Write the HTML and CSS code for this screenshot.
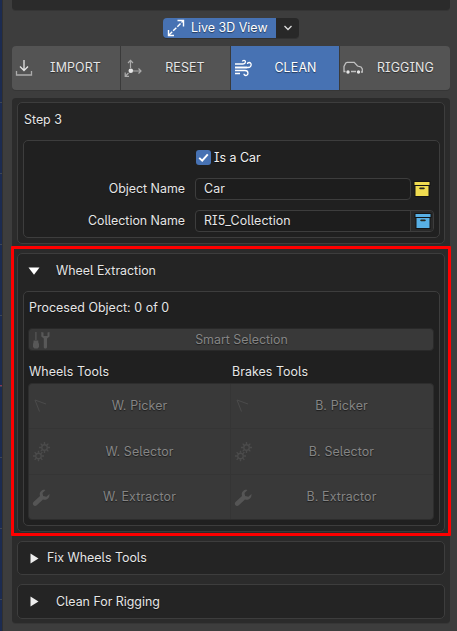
FILE: index.html
```
<!DOCTYPE html>
<html lang="en">
<head>
<meta charset="utf-8">
<title>Clean tools</title>
<link rel="stylesheet" href="styles.css">
</head>
<body>
<svg class="defs" width="0" height="0">
  <defs>
    <symbol id="pick" viewBox="0 0 18 18"><path d="M7.5 14.5 3 3l11 4" fill="none" stroke="currentColor" stroke-width="1"/></symbol>
    <symbol id="gear" viewBox="-5 -5 10 10"><circle r="2.5" fill="none" stroke="currentColor" stroke-width="1.3"/><path d="M0-3V-5M0 3V5M-3 0H-5M3 0H5M2.1-2.1 3.5-3.5M-2.1-2.1-3.5-3.5M2.1 2.1 3.5 3.5M-2.1 2.1-3.5 3.5" stroke="currentColor" stroke-width="1.2"/></symbol>
    <symbol id="gears" viewBox="0 0 18 20"><use href="#gear" x="7" y="0" width="11" height="11"/><use href="#gear" x="1" y="8.5" width="11" height="11"/></symbol>
    <symbol id="wrench" viewBox="0 0 18 18"><path d="M13.5 1C10 0 6.8 3.5 8 7L1.5 13c-2 2.400.8 5.200 3.300 3.300L11 10.500c3.500 1 7-1.500 6.400-5.500l-3 2.800-3.300-.8-.6-3z" fill="currentColor"/></symbol>
    <symbol id="box" viewBox="0 0 18 18"><path d="M.5 1h17v5h-1v11H1.500V6h-1z" fill="#151515"/><path class="fill" d="M1.500 2h15v3h-15zM2.500 6h13v10h-13z"/><path d="M7 7.500h4l1 .8-1 1H7l-1-1z" fill="#29291f"/></symbol>
  </defs>
</svg>
<div class="viewport"></div>
<main class="sidebar">
  <div class="top-panel"></div>
  <div class="view-bar">
    <div class="view-button">
      <svg width="18" height="18" viewBox="0 0 18 18" fill="none" stroke="currentColor" stroke-width="1.400"><path d="M10.500 1.500h6v6M7 16.500H1.500V11"/><path d="M2 16 16 2" stroke-dasharray="4.500 1.400"/></svg>
      <span>Live 3D View</span>
    </div>
    <div class="view-menu"><svg width="10" height="6" viewBox="0 0 10 6"><path d="M1.500 1 5 4.500 8.500 1" fill="none" stroke="#ddd" stroke-width="1.300"/></svg></div>
  </div>
  <nav class="tabs">
    <div class="tab"><svg width="18" height="18" viewBox="0 0 18 18" fill="none" stroke="currentColor" stroke-width="1.300"><path d="M9 1v10M5 7.500l4 4 4-4"/><path d="M1.500 12v4h15v-4" opacity=".6"/></svg><span>IMPORT</span></div>
    <div class="tab"><svg width="18" height="18" viewBox="0 0 18 18" fill="none" stroke="currentColor" stroke-width="1.200"><g opacity=".6"><path d="M6.500 9V1.500M4 4l2.500-2.700L9 4M9 12h8M14.500 9.500 17 12l-2.500 2.500M4.500 14l-3 3M1.200 13.500v3.800H5"/></g><circle cx="6.800" cy="11.700" r="2.300" fill="currentColor" stroke="none"/></svg><span>RESET</span></div>
    <div class="tab active"><svg width="18" height="18" viewBox="0 0 18 18" fill="none" stroke="currentColor" stroke-width="1.300"><path d="M1 5h8c3 0 3-3.700 1-3.700-1 0-1.500.6-1.500 1.200M1 8.500h13c4 0 4-5 1.200-5-1.200 0-1.800.8-1.800 1.600M1 11.500h10c4 0 3.500 5 1 5-1.200 0-2-.8-2-1.700M1 14.500h5"/><path d="M1 8.500h12" stroke-width="1.800" opacity=".6"/></svg><span>CLEAN</span></div>
    <div class="tab"><svg width="20" height="18" viewBox="0 0 20 18" fill="none" stroke="currentColor" stroke-width="1.300"><path d="M2.500 12.500H1V7.500L2.800 4l1.400-.7h7L14.500 7l3.500 1 1.300 2v3H18" opacity=".75"/><path d="M8 12.500h5" opacity=".75"/><circle cx="5" cy="13" r="1.700" fill="currentColor" stroke="none"/><circle cx="15.500" cy="13" r="1.700" fill="currentColor" stroke="none"/></svg><span>RIGGING</span></div>
  </nav>
  <section class="panel">
    <div class="card step">
      <div class="step-title">Step 3</div>
      <div class="inner fields">
        <div class="check-row"><i class="check"><svg width="15" height="15" viewBox="0 0 14 14"><path d="M3 7.300 5.800 10 11 4" fill="none" stroke="#fff" stroke-width="1.800"/></svg></i><span>Is a Car</span></div>
        <div class="field-row"><label>Object Name</label><div class="field short">Car</div><svg class="yellow" width="18" height="18"><use href="#box"/></svg></div>
        <div class="field-row"><label>Collection Name</label><div class="field long"><span>RI5_Collection</span><div class="end"><svg class="blue" width="18" height="18"><use href="#box"/></svg></div></div></div>
      </div>
    </div>
    <div class="card wheel">
      <div class="head"><svg width="12" height="8"><path d="M.5.500h11L6 7.800z" fill="#fff"/></svg><span>Wheel Extraction</span></div>
      <div class="inner tools">
        <div class="processed">Procesed Object: 0 of 0</div>
        <div class="smart"><svg width="18" height="18" viewBox="0 0 18 18" fill="currentColor"><path d="M3.300 1h1.200v8H3.300zM1.500 9.500h4.800v1.800L7 13v3l-1.500 1.500h-3L1 16v-3l.5-1.700z"/><path d="M9.300 1v4.500l2.500 2V16c0 2 3.200 2 3.200 0V7.500l2.500-2V1l-2 .5V5h-4V1.500z"/></svg><span>Smart Selection</span></div>
        <div class="labels"><span>Wheels Tools</span><span>Brakes Tools</span></div>
        <div class="grid">
          <div class="cell"><svg width="18" height="18"><use href="#pick"/></svg><span>W. Picker</span></div>
          <div class="cell"><svg width="18" height="18"><use href="#pick"/></svg><span>B. Picker</span></div>
          <div class="cell mid"><svg width="18" height="20"><use href="#gears"/></svg><span>W. Selector</span></div>
          <div class="cell mid"><svg width="18" height="20"><use href="#gears"/></svg><span>B. Selector</span></div>
          <div class="cell bright"><svg width="18" height="18"><use href="#wrench"/></svg><span>W. Extractor</span></div>
          <div class="cell bright"><svg width="18" height="18"><use href="#wrench"/></svg><span>B. Extractor</span></div>
        </div>
      </div>
    </div>
    <div class="card fold fix"><svg width="9" height="11"><path d="M.5.500v10L8.500 5.500z" fill="#eee"/></svg><span>Fix Wheels Tools</span></div>
    <div class="card fold rig"><svg width="9" height="11"><path d="M.5.500v10L8.500 5.500z" fill="#eee"/></svg><span>Clean For Rigging</span></div>
  </section>
</main>
<div class="highlight"></div>
</body>
</html>
```
FILE: styles.css
```
* { box-sizing: border-box; }
body {
  margin: 0;
  width: 457px;
  height: 631px;
  display: flex;
  position: relative;
  overflow: hidden;
  background: #3d3d3d;
  color: #e6e6e6;
  font: 12.4px/16px Inter, "Liberation Sans", sans-serif;
  font-feature-settings: "cv05", "cv08";
  letter-spacing: 0;
  text-shadow: 0 1px 1px rgba(0, 0, 0, .5);
  white-space: nowrap;
}
svg { display: block; flex: none; }
.defs { position: absolute; }
.viewport {
  width: 3px;
  background:
    linear-gradient(#8c3550, #8c3550) 0 385px / 3px 1px no-repeat,
    repeating-linear-gradient(#1c2b50 0 70px, #3d4656 70px 71px) 0 32px;
  border-right: 1px solid #303030;
}
.sidebar { width: 454px; padding: 0 7px 0 9px; }
.top-panel { height: 10px; background: #2b2b2b; border-radius: 0 0 4px 4px; box-shadow: 0 1px #353535; }
.view-bar { height: 20px; margin: 8px 0 8px 151px; display: flex; width: 136px; box-shadow: 0 1px #323232; border-radius: 4px; }
.view-button { width: 113px; background: #4772b3; border-radius: 4px 0 0 4px; display: flex; align-items: center; padding-left: 4px; color: #fff; }
.view-button span { margin-left: 6px; letter-spacing: .03px; }
.view-menu { width: 23px; background: #282828; border-radius: 0 4px 4px 0; display: flex; align-items: center; justify-content: center; }
.tabs { height: 44px; display: grid; grid-template-columns: 108px 109px 108px 110px; gap: 1px; background: #3a3a3a; border-radius: 4px; overflow: hidden; box-shadow: 0 1px #363636; letter-spacing: .15px; }
.tab { background: #545454; display: flex; align-items: center; padding-left: 3px; }
.tab span { flex: 1; text-align: center; padding: 0 2px 1px 0; }
.tab.active { background: #4772b3; color: #fff; }
.tab.active span { padding-right: 0; }
.panel { margin-top: 8px; height: 525px; background: #2b2b2b; border-radius: 4px; padding: 4px 5px; box-shadow: 0 1px #363636; }
.card { border: 1px solid #3d3d3d; border-radius: 5px; background: #242424; }
.inner { border: 1px solid #3d3d3d; border-radius: 5px; background: #202020; margin: 0 4px 0 5px; }
.step { height: 142px; }
.step-title { height: 37px; padding: 9px 0 0 6px; }
.fields { height: 98px; }
.check-row { height: 37px; padding: 9px 0 0 172px; display: flex; }
.check { width: 15px; height: 15px; background: #4772b3; border-radius: 3px; margin-right: 3px; }
.check-row span { color: #f0f0f0; }
.field-row { height: 32px; display: flex; align-items: flex-start; }
.field-row label { width: 161px; text-align: right; line-height: 22px; margin-right: 10px; }
.field { height: 22px; border: 1px solid #3d3d3d; border-radius: 4px; background: #1d1d1d; padding-left: 8px; line-height: 20px; letter-spacing: .1px; }
.short { width: 216px; margin-right: 2px; }
.field-row > svg { margin-top: 2px; }
.long { width: 239px; display: flex; justify-content: space-between; }
.end { width: 23px; border-left: 1px solid #3d3d3d; background: #292929; border-radius: 0 3px 3px 0; padding: 1px 0 0 3px; }
.yellow { fill: #f0dc50; }
.blue { fill: #58b0e5; }
.wheel { height: 279px; margin-top: 9px; }
.head { height: 37px; display: flex; align-items: center; padding: 0 0 3px 10px; }
.head span { margin-left: 16px; }
.tools { height: 235px; padding: 8px 5px 0 4px; }
.processed { padding-left: 1px; height: 28px; letter-spacing: .05px; }
.smart { height: 23px; border: 1px solid #292929; background: #393939; border-radius: 4px; display: flex; align-items: center; color: #585858; padding-left: 3px; }
.smart span { flex: 1; text-align: center; color: #858585; padding-top: 1px; }
.labels { display: grid; grid-template-columns: 203px 1fr; padding: 13px 0 0 1px; height: 32px; letter-spacing: .07px; }
.grid { height: 137px; display: grid; grid-template: 45px 46px 46px / 202px 204px; background: #393939; border: 1px solid #2d2d2d; border-radius: 4px; overflow: hidden; letter-spacing: .13px; }
.cell { display: flex; align-items: center; border-bottom: 1px solid #353535; padding-left: 3px; color: #4b4b4b; }
.cell:nth-child(odd) { border-right: 1px solid #353535; }
.cell.bright { color: #555; border-bottom: 0; padding-bottom: 1px; }
.cell span { flex: 1; text-align: center; color: #858585; padding: 0 1px 1px 0; }
.cell:nth-child(even) span { padding-right: 4px; }
.cell.mid span { padding-top: 1px; padding-bottom: 0; }
.fold { display: flex; align-items: center; padding-left: 12px; }
.fix { height: 34px; margin-top: 9px; }
.fix span { margin-left: 8px; }
.rig { height: 35px; margin-top: 9px; }
.rig span { margin-left: 17px; }
.highlight { position: absolute; left: 11px; top: 246px; width: 440px; height: 290px; border: 3px solid #f00; border-radius: 1px; }
```
